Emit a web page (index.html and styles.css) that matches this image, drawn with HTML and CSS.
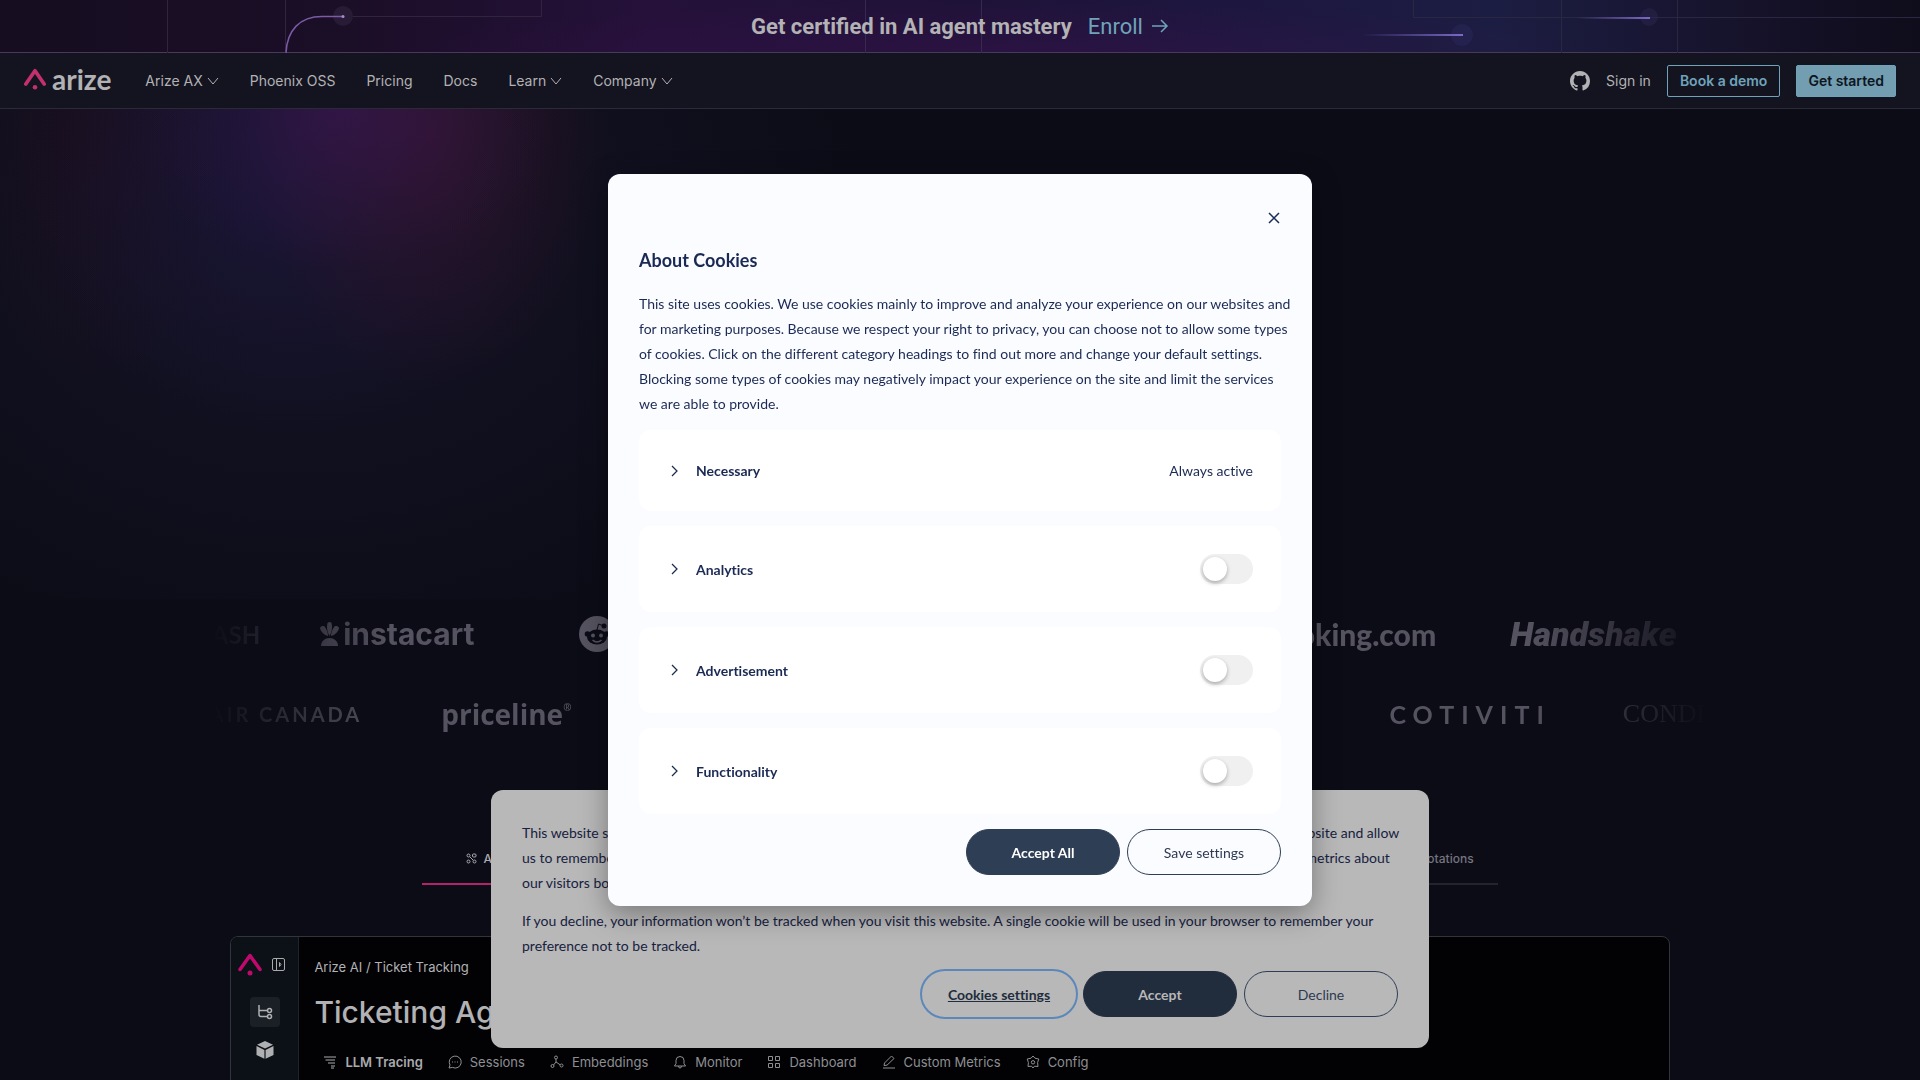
FILE: index.html
```html
<!DOCTYPE html>
<html lang="en">
<head>
    <meta charset="UTF-8">
    <meta name="viewport" content="width=device-width, initial-scale=1.0">
    <title>Arize AI</title>
    <link rel="stylesheet" href="styles.css">
</head>
<body>
    <div class="promo">
        <svg class="promo-lines promo-lines-left" width="560" height="53" viewBox="0 0 560 53" fill="none" aria-hidden="true">
            <path d="M167.500 0V53M285.500 0V53M343 16.500H541.500V0" stroke="#32243f"/>
            <circle cx="343" cy="16" r="10" fill="#271b36"/>
            <path d="M286 53C287 30 300 16.500 322 16.500H343" stroke="#7b5aa6" stroke-width="1.500"/>
            <circle cx="343" cy="16.500" r="1.500" fill="#a58bd0"/>
        </svg>
        <svg class="promo-lines promo-lines-mid" width="120" height="53" viewBox="0 0 120 53" fill="none" aria-hidden="true">
            <path d="M1.500 0V53M117.500 0V53" stroke="#37294f"/>
        </svg>
        <p class="promo-text">Get certified in AI agent mastery</p>
        <a class="promo-link" href="#">Enroll
            <svg width="18" height="16" viewBox="0 0 18 16" fill="none" stroke="currentColor" stroke-width="1.500" aria-hidden="true"><path d="M1 8H16M10 2L16 8L10 14"/></svg>
        </a>
        <svg class="promo-lines promo-lines-right" width="560" height="53" viewBox="0 0 560 53" fill="none" aria-hidden="true">
            <defs>
                <linearGradient id="trail" x1="0" x2="1" y1="0" y2="0">
                    <stop offset="0" stop-color="#6d5fc0" stop-opacity="0"/>
                    <stop offset="1" stop-color="#7b6bc4"/>
                </linearGradient>
            </defs>
            <path d="M53.500 0V17.500H560M201.500 0V53M317.500 0V53" stroke="#2a2742"/>
            <circle cx="102" cy="35" r="11" fill="#29285a" fill-opacity=".5"/>
            <circle cx="289" cy="17" r="9" fill="#29264e" fill-opacity=".5"/>
            <rect x="2" y="34" width="101" height="2" fill="url(#trail)"/>
            <rect x="216" y="17" width="74" height="2" fill="url(#trail)"/>
        </svg>
    </div>

    <header class="navbar">
        <a class="brand" href="#">
            <svg width="22" height="22" viewBox="0 0 24 24" aria-hidden="true"><path d="M2 17.500L12 3L22 17.500" fill="none" stroke="#c42f70" stroke-width="4" stroke-linecap="round" stroke-linejoin="round"/><circle cx="12" cy="21" r="2.500" fill="#c42f70"/></svg>
            <span>arize</span>
        </a>
        <nav class="nav-links">
            <a href="#">Arize AX <svg class="caret" viewBox="0 0 12 8"><path d="M1 1L6 7L11 1"/></svg></a>
            <a href="#">Phoenix OSS</a>
            <a href="#">Pricing</a>
            <a href="#">Docs</a>
            <a href="#">Learn <svg class="caret" viewBox="0 0 12 8"><path d="M1 1L6 7L11 1"/></svg></a>
            <a href="#">Company <svg class="caret" viewBox="0 0 12 8"><path d="M1 1L6 7L11 1"/></svg></a>
        </nav>
        <div class="nav-actions">
            <a class="github" href="#" aria-label="GitHub">
                <svg width="20" height="20" viewBox="0 0 16 16" fill="currentColor"><path d="M8 0C3.580 0 0 3.580 0 8c0 3.540 2.290 6.530 5.470 7.590.4.070.55-.17.55-.38 0-.19-.01-.82-.01-1.490-2.010.37-2.530-.49-2.690-.94-.09-.23-.48-.94-.82-1.130-.28-.15-.68-.52-.01-.53.630-.01 1.080.58 1.230.82.720 1.210 1.870.87 2.330.66.070-.52.280-.87.510-1.070-1.780-.2-3.640-.89-3.640-3.950 0-.87.310-1.590.82-2.150-.08-.2-.36-1.020.08-2.120 0 0 .67-.21 2.200.82.640-.18 1.320-.27 2-.27s1.360.09 2 .27c1.530-1.040 2.200-.82 2.200-.82.440 1.100.16 1.920.08 2.120.51.560.82 1.270.82 2.150 0 3.070-1.870 3.750-3.650 3.950.29.250.54.730.54 1.480 0 1.070-.01 1.930-.01 2.200 0 .21.150.46.55.38A8.010 8.010 0 0 0 16 8c0-4.420-3.580-8-8-8z"/></svg>
            </a>
            <a class="sign-in" href="#">Sign in</a>
            <a class="btn btn-outline" href="#">Book a demo</a>
            <a class="btn btn-solid" href="#">Get started</a>
        </div>
    </header>

    <main>
        <section class="hero"></section>

        <section class="logos">
            <div class="logo-row">
                <span class="logo logo-doordash">DASH</span>
                <span class="logo logo-instacart">
                    <svg width="19" height="24" viewBox="0 0 19 24" fill="currentColor" aria-hidden="true"><path d="M1 24C1 19 5 16 9.500 16S18 19 18 24Z"/><path d="M9.500 14C7 10 6.500 5 7.500 1C8.500-.3 10.500-.3 11.500 1C12.500 5 12 10 9.500 14Z"/><path d="M8 14C3.500 13 .5 9 0 6C1 4 3 3.500 4.500 4.500C6.500 7 8 10 8 14Z"/><path d="M11 14C15.500 13 18.500 9 19 6C18 4 16 3.500 14.500 4.500C12.500 7 11 10 11 14Z"/></svg>
                    instacart
                </span>
                <span class="logo logo-reddit">
                    <svg width="36" height="36" viewBox="0 0 36 36" aria-hidden="true"><circle cx="18" cy="18" r="18" fill="currentColor"/><g fill="#0c0c17"><circle cx="8.500" cy="18" r="2.800"/><circle cx="27.500" cy="18" r="2.800"/><ellipse cx="18" cy="21" rx="10" ry="7.500"/><circle cx="25" cy="10" r="2.500"/></g><path d="M18 14L19.500 8L25 10" fill="none" stroke="#0c0c17"/><circle cx="14" cy="19.500" r="2" fill="currentColor"/><circle cx="22" cy="19.500" r="2" fill="currentColor"/><path d="M13.500 24Q18 28 22.500 24" fill="none" stroke="currentColor" stroke-width="1.500"/></svg>
                </span>
                <span class="logo logo-booking">Booking.com</span>
                <span class="logo logo-handshake">Handshake</span>
            </div>
            <div class="logo-row">
                <span class="logo logo-aircanada">AIR CANADA</span>
                <span class="logo logo-priceline">priceline<sup>®</sup></span>
                <span class="logo logo-cotiviti">COTIVITI</span>
                <span class="logo logo-conde">CONDÉ</span>
            </div>
        </section>

        <section class="product">
            <div class="feature-tabs">
                <button class="feature-tab active">
                    <svg width="11" height="11" viewBox="0 0 11 11" fill="none" stroke="currentColor" aria-hidden="true"><circle cx="2.500" cy="2.500" r="1.500"/><rect x="6.500" y="1" width="3.500" height="3" rx="1"/><circle cx="2.500" cy="8.500" r="1.500"/><circle cx="8.500" cy="8.500" r="1.500"/><path d="M4 4L7 7"/></svg>
                    Agents
                </button>
                <button class="feature-tab">Tracing</button>
                <button class="feature-tab">Evaluation</button>
                <button class="feature-tab">Experiments</button>
                <button class="feature-tab">Annotations</button>
            </div>

            <div class="app">
                <aside class="app-side">
                    <div class="app-side-top">
                        <svg width="24" height="24" viewBox="0 0 24 24" aria-hidden="true"><path d="M2 17.500L12 3.500L22 17.500" fill="none" stroke="#c1086f" stroke-width="3.500" stroke-linecap="round" stroke-linejoin="round"/><circle cx="12" cy="21" r="2.500" fill="#c1086f"/></svg>
                        <svg width="13" height="13" viewBox="0 0 13 13" fill="none" stroke="#a9abad" aria-hidden="true"><rect x=".5" y=".5" width="12" height="12" rx="1.500"/><path d="M4.500 .5V12.500M7.500 4.500L9 6.500L7.500 8.500Z"/></svg>
                    </div>
                    <button class="side-btn active" aria-label="Tracing">
                        <svg width="16" height="16" viewBox="0 0 16 16" fill="none" stroke="currentColor" stroke-width="1.500"><path d="M2 1V10.500Q2 12.500 4 12.500H10.500M2 6.500H10.500"/><circle cx="12.500" cy="6.500" r="2"/><circle cx="12.500" cy="12.500" r="2"/></svg>
                    </button>
                    <button class="side-btn" aria-label="Datasets">
                        <svg width="18" height="18" viewBox="0 0 18 18" fill="currentColor"><path d="M9 0L17 3.700L9 7.600L1 3.700ZM.5 5L8.400 9V17.700L.5 14ZM17.500 5L9.600 9V17.700L17.500 14Z"/></svg>
                    </button>
                </aside>
                <div class="app-main">
                    <p class="crumbs">Arize AI / Ticket Tracking</p>
                    <h2>Ticketing Agent</h2>
                    <nav class="app-tabs">
                        <a class="active" href="#"><svg viewBox="0 0 14 14"><path d="M1 2H13M2.500 5H12M5 8H12M8 11H12M8 13H11"/></svg>LLM Tracing</a>
                        <a href="#"><svg viewBox="0 0 14 14"><path d="M1 13L2 10A6 6 0 1 1 4.500 12.400ZM4 7H5M6.500 7H7.500M9 7H10"/></svg>Sessions</a>
                        <a href="#"><svg viewBox="0 0 14 14"><circle cx="6" cy="2.500" r="1.500"/><circle cx="2.500" cy="11" r="1.500"/><circle cx="11.500" cy="10.500" r="1.500"/><path d="M6 4V7L3.500 10M6 7L10 9.700"/></svg>Embeddings</a>
                        <a href="#"><svg viewBox="0 0 14 14"><path d="M1.500 11H12.500L11 8.500V5.500A4 4 0 0 0 3 5.500V8.500ZM5.500 11Q5.500 13 7 13T8.500 11"/></svg>Monitor</a>
                        <a href="#"><svg viewBox="0 0 14 14"><path d="M1.500 1.500H5.500V5.500H1.500ZM8.500 1.500H12.500V5.500H8.500ZM1.500 8.500H5.500V12.500H1.500ZM8.500 8.500H12.500V12.500H8.500Z"/></svg>Dashboard</a>
                        <a href="#"><svg viewBox="0 0 14 14"><path d="M2 10.500L2.500 8L9.500 1L12 3.500L5 10.200ZM1 13H13"/></svg>Custom Metrics</a>
                        <a href="#"><svg viewBox="0 0 14 14"><path d="M7 1L9 3.200L12.800 4L11.600 7.500L12 11.500L8.500 11.200L7 13L5.500 11.200L2 11.500L2.400 7.500L1.200 4L5 3.200Z"/><circle cx="7" cy="7.300" r="1.700"/></svg>Config</a>
                    </nav>
                </div>
            </div>
        </section>
    </main>

    <section class="cookie-bar" aria-label="Cookie notice">
        <p>This website stores cookies on your computer. These cookies are used to collect information about how you interact with our website and allow us to remember you. We use this information in order to improve and customize your browsing experience and for analytics and metrics about our visitors both on this website and other media. To find out more about the cookies we use, see our Privacy Policy.</p>
        <p>If you decline, your information won’t be tracked when you visit this website. A single cookie will be used in your browser to remember your preference not to be tracked.</p>
        <div class="cookie-actions">
            <button class="pill pill-link">Cookies settings</button>
            <button class="pill pill-dim">Accept</button>
            <button class="pill pill-outline">Decline</button>
        </div>
    </section>

    <div class="modal-wrap">
        <div class="modal" role="dialog" aria-labelledby="cookies-title">
            <div class="modal-top">
                <button class="modal-close" aria-label="Close">
                    <svg width="12" height="12" viewBox="0 0 12 12" fill="none" stroke="currentColor" stroke-width="1.500"><path d="M1 1L11 11M11 1L1 11"/></svg>
                </button>
            </div>
            <h2 id="cookies-title">About Cookies</h2>
            <p class="modal-text">This site uses cookies. We use cookies mainly to improve and analyze your experience on our websites and for marketing purposes. Because we respect your right to privacy, you can choose not to allow some types of cookies. Click on the different category headings to find out more and change your default settings. Blocking some types of cookies may negatively impact your experience on the site and limit the services we are able to provide.</p>
            <div class="categories">
                <div class="category category-fixed">
                    <button class="expand" aria-label="Show necessary cookies"><svg viewBox="0 0 8 12"><path d="M1 1L6 6L1 11"/></svg></button>
                    <span class="category-name">Necessary</span>
                    <span>Always active</span>
                </div>
                <div class="category">
                    <button class="expand" aria-label="Show analytics cookies"><svg viewBox="0 0 8 12"><path d="M1 1L6 6L1 11"/></svg></button>
                    <label class="category-name" for="analytics">Analytics</label>
                    <input class="toggle" type="checkbox" id="analytics">
                </div>
                <div class="category">
                    <button class="expand" aria-label="Show advertisement cookies"><svg viewBox="0 0 8 12"><path d="M1 1L6 6L1 11"/></svg></button>
                    <label class="category-name" for="advertisement">Advertisement</label>
                    <input class="toggle" type="checkbox" id="advertisement">
                </div>
                <div class="category">
                    <button class="expand" aria-label="Show functionality cookies"><svg viewBox="0 0 8 12"><path d="M1 1L6 6L1 11"/></svg></button>
                    <label class="category-name" for="functionality">Functionality</label>
                    <input class="toggle" type="checkbox" id="functionality">
                </div>
            </div>
            <div class="cookie-actions">
                <button class="pill pill-solid">Accept All</button>
                <button class="pill pill-outline">Save settings</button>
            </div>
        </div>
    </div>
</body>
</html>
```
FILE: styles.css
```css
* {
    box-sizing: border-box;
}
body {
    margin: 0;
    height: 100vh;
    overflow: hidden;
    background-color: #0c0c17;
    color: #b2b2b4;
    font-family: Inter, "Liberation Sans", sans-serif;
    font-size: 14px;
}
a {
    color: inherit;
    text-decoration: none;
}
button {
    font-family: inherit;
    border: none;
    padding: 0;
    background: none;
    color: inherit;
    cursor: pointer;
}
p, h2 {
    margin: 0;
}
svg {
    flex: none;
}

/* promo banner */
.promo {
    position: relative;
    display: flex;
    align-items: center;
    justify-content: center;
    gap: 16px;
    height: 53px;
    border-bottom: 1px solid #49395a;
    background:
        radial-gradient(ellipse 600px 50px at 52% 100%, rgba(60, 18, 80, 0.4), transparent),
        linear-gradient(90deg, #160d20 0%, #1b0e27 18%, #25113a 34%, #1f1238 50%, #1d173f 65%, #1c1d42 78%, #16132c 90%, #0f0c1b 100%);
    font-family: Roboto, "Liberation Sans", sans-serif;
    font-size: 22px;
}
.promo-lines {
    position: absolute;
    top: 0;
}
.promo-lines-left {
    left: 0;
}
.promo-lines-mid {
    left: 45%;
}
.promo-lines-right {
    right: 0;
}
.promo-text {
    position: relative;
    color: #b3b2b5;
    font-weight: 700;
}
.promo-link {
    position: relative;
    display: flex;
    align-items: center;
    gap: 8px;
    color: #6fa3ba;
}

/* navigation */
.navbar {
    display: flex;
    align-items: center;
    height: 56px;
    padding: 0 24px;
    border-bottom: 1px solid #2a2a38;
    background-color: #141420;
}
.brand {
    display: flex;
    align-items: center;
    gap: 6px;
    margin-right: 34px;
    padding-bottom: 3px;
    font-family: Lato, sans-serif;
    font-size: 28px;
    font-weight: 700;
    line-height: 28px;
}
.nav-links {
    display: flex;
    gap: 31px;
}
.nav-links a {
    display: flex;
    align-items: center;
    gap: 4px;
}
.caret {
    width: 12px;
    height: 8px;
    fill: none;
    stroke: currentColor;
}
.nav-actions {
    display: flex;
    align-items: center;
    gap: 16px;
    margin-left: auto;
}
.github {
    display: flex;
}
.btn {
    height: 32px;
    padding: 0 12px;
    border: 1px solid #6fa3ba;
    border-radius: 2px;
    line-height: 30px;
    font-weight: 600;
}
.btn-outline {
    color: #6fa3ba;
}
.btn-solid {
    padding: 0 11px;
    background-color: #739db0;
    color: #0c1622;
}

/* hero */
.hero {
    height: 490px;
    background:
        radial-gradient(ellipse 220px 160px at 340px 0, rgba(64, 24, 92, 0.5), rgba(64, 24, 92, 0.15) 60%, transparent),
        radial-gradient(ellipse 180px 260px at 430px 20px, rgba(80, 20, 50, 0.4), rgba(70, 20, 46, 0.2) 60%, transparent),
        radial-gradient(ellipse 260px 240px at 290px 80px, rgba(30, 22, 66, 0.5), rgba(30, 22, 66, 0.2) 60%, transparent),
        radial-gradient(ellipse 140px 260px at 90px 20px, rgba(50, 12, 28, 0.25), transparent),
        radial-gradient(ellipse 560px 460px at 300px 100px, rgba(24, 22, 44, 0.8), transparent);
}

/* customer logos */
.logos {
    display: flex;
    flex-direction: column;
    gap: 20px;
    width: 78%;
    margin: 0 auto;
    padding-top: 5px;
    -webkit-mask-image: linear-gradient(90deg, transparent, #000 12%, #000 88%, transparent);
    mask-image: linear-gradient(90deg, transparent, #000 12%, #000 88%, transparent);
}
.logo-row {
    display: flex;
    align-items: center;
    height: 60px;
    overflow: hidden;
}
.logo {
    display: flex;
    align-items: center;
    color: #55535f;
    white-space: nowrap;
}
.logo-doordash {
    justify-content: flex-end;
    width: 49px;
    margin-right: 60px;
    font-family: Lato, sans-serif;
    font-size: 24px;
    font-weight: 700;
}
.logo-instacart {
    gap: 4px;
    margin-right: 104px;
    font-size: 30px;
    font-weight: 700;
}
.logo-booking {
    margin-left: auto;
    margin-right: 74px;
    font-family: Lato, sans-serif;
    font-size: 30px;
    font-weight: 900;
}
.logo-handshake {
    margin-right: 32px;
    font-family: Roboto, sans-serif;
    font-size: 34px;
    font-style: italic;
    font-weight: 900;
}
.logo-aircanada {
    justify-content: flex-end;
    width: 151px;
    margin-right: 79px;
    font-family: Lato, sans-serif;
    font-size: 20px;
    font-weight: 700;
    letter-spacing: 3px;
}
.logo-priceline {
    font-family: "Open Sans", sans-serif;
    font-size: 28px;
    font-weight: 700;
}
.logo-priceline sup {
    font-size: 10px;
    line-height: 24px;
    align-self: flex-start;
}
.logo-cotiviti {
    margin-left: auto;
    margin-right: 72px;
    font-family: Lato, sans-serif;
    font-size: 25px;
    font-weight: 700;
    letter-spacing: 7px;
}
.logo-conde {
    width: 86px;
    font-family: "Liberation Serif", serif;
    font-size: 26px;
}

/* product preview */
.product {
    padding-top: 90px;
}
.feature-tabs {
    display: flex;
    width: 56%;
    margin: 0 auto 51px;
}
.feature-tab {
    display: flex;
    flex: 1;
    align-items: center;
    justify-content: center;
    gap: 6px;
    height: 51px;
    border-bottom: 2px solid #24242f;
    color: #75757f;
    font-size: 12px;
    font-weight: 500;
}
.feature-tab.active {
    border-bottom-color: #b3226b;
    color: #a9a9ae;
}
.feature-tab:first-child {
    justify-content: flex-start;
    padding-left: 44px;
}
.feature-tab:last-child {
    justify-content: flex-end;
    padding-right: 24px;
}
.app {
    display: flex;
    width: 75%;
    min-height: 600px;
    margin-left: 12%;
    border: 1px solid #34353a;
    border-radius: 8px;
    overflow: hidden;
    background-color: #020205;
}
.app-side {
    display: flex;
    flex-direction: column;
    align-items: center;
    gap: 8px;
    width: 68px;
    padding-top: 15px;
    border-right: 1px solid #212428;
    background-color: #0c1117;
}
.app-side-top {
    display: flex;
    align-items: center;
    align-self: stretch;
    gap: 10px;
    margin-bottom: 13px;
    padding-left: 7px;
}
.side-btn {
    display: flex;
    align-items: center;
    justify-content: center;
    width: 30px;
    height: 30px;
    border-radius: 4px;
    color: #aeb0b2;
}
.side-btn.active {
    background-color: #1b2027;
}
.app-main {
    flex: 1;
    padding: 20px 15px;
}
.crumbs {
    font-size: 13px;
    line-height: 20px;
}
.app-main h2 {
    margin: 15px 0 20px;
    font-size: 30px;
    line-height: 40px;
    font-weight: 500;
}
.app-tabs {
    display: flex;
    gap: 25px;
    padding-left: 9px;
    font-size: 13px;
    line-height: 20px;
    color: #8e8f92;
}
.app-tabs a {
    display: flex;
    align-items: center;
    gap: 8px;
}
.app-tabs .active {
    color: #aaabad;
    font-weight: 600;
}
.app-tabs svg {
    width: 14px;
    height: 14px;
    fill: none;
    stroke: currentColor;
}

/* cookie notice */
.cookie-bar {
    position: fixed;
    left: 50%;
    bottom: 32px;
    transform: translateX(-50%);
    width: 938px;
    max-width: 100%;
    padding: 30px 31px 31px;
    border-radius: 12px;
    background-color: #b8b8b8;
    color: #17213f;
    font-family: Lato, sans-serif;
    font-variant-ligatures: no-common-ligatures;
    line-height: 25px;
}
.cookie-bar p {
    margin-right: -12px;
    margin-bottom: 13px;
}
.cookie-actions {
    display: flex;
    justify-content: flex-end;
    gap: 7px;
}
.pill {
    width: 154px;
    height: 46px;
    border: 1px solid #2e3e55;
    border-radius: 23px;
    font-size: 14px;
    font-variant-ligatures: no-common-ligatures;
}
.pill-outline {
    color: #2e3a50;
}
.pill-solid {
    background-color: #2e3e55;
    color: #fff;
    font-weight: 700;
}
.pill-dim {
    border-color: #212c3c;
    background-color: #212c3c;
    color: #b8b8b8;
    font-weight: 700;
}
.pill-link {
    border: none;
    outline: 2px solid #5c87bb;
    color: #212c3c;
    font-weight: 700;
    text-decoration: underline;
}

/* cookie settings modal */
.modal-wrap {
    position: fixed;
    inset: 0;
    display: flex;
    align-items: center;
    justify-content: center;
}
.modal {
    width: 704px;
    max-width: 100%;
    padding: 31px;
    border-radius: 12px;
    background-color: #fbfcff;
    box-shadow: 0 8px 28px rgba(0, 0, 0, 0.35);
    color: #1b2a55;
    font-family: Lato, sans-serif;
    font-variant-ligatures: no-common-ligatures;
    line-height: 25px;
}
.modal-top {
    display: flex;
    justify-content: flex-end;
    padding: 6px 0 23px;
}
.modal-close {
    display: flex;
    justify-content: center;
    align-items: center;
    width: 14px;
    height: 14px;
}
.modal h2 {
    margin-bottom: 18px;
    font-size: 18px;
    line-height: 25px;
}
.modal-text {
    margin-right: -14px;
    margin-bottom: 14px;
}
.categories {
    display: flex;
    flex-direction: column;
    gap: 15px;
    margin-bottom: 15px;
}
.category {
    display: flex;
    align-items: center;
    height: 86px;
    padding: 0 28px 0 32px;
    border-radius: 12px;
    background-color: #fff;
}
.category-fixed {
    height: 81px;
}
.expand {
    display: flex;
    width: 8px;
    margin-right: 17px;
}
.expand svg {
    width: 8px;
    height: 12px;
    fill: none;
    stroke: currentColor;
    stroke-width: 1.25;
}
.category-name {
    flex: 1;
    font-weight: 700;
}
.toggle {
    appearance: none;
    width: 53px;
    height: 30px;
    margin: 0;
    padding: 3px;
    border-radius: 15px;
    background-color: #f0f0f0;
    cursor: pointer;
}
.toggle::before {
    content: "";
    display: block;
    width: 24px;
    height: 24px;
    border-radius: 50%;
    background-color: #fff;
    box-shadow: 0 2px 4px rgba(0, 0, 0, 0.3);
}
.toggle:checked {
    background-color: #2e3e55;
}
.toggle:checked::before {
    margin-left: 23px;
}
```
